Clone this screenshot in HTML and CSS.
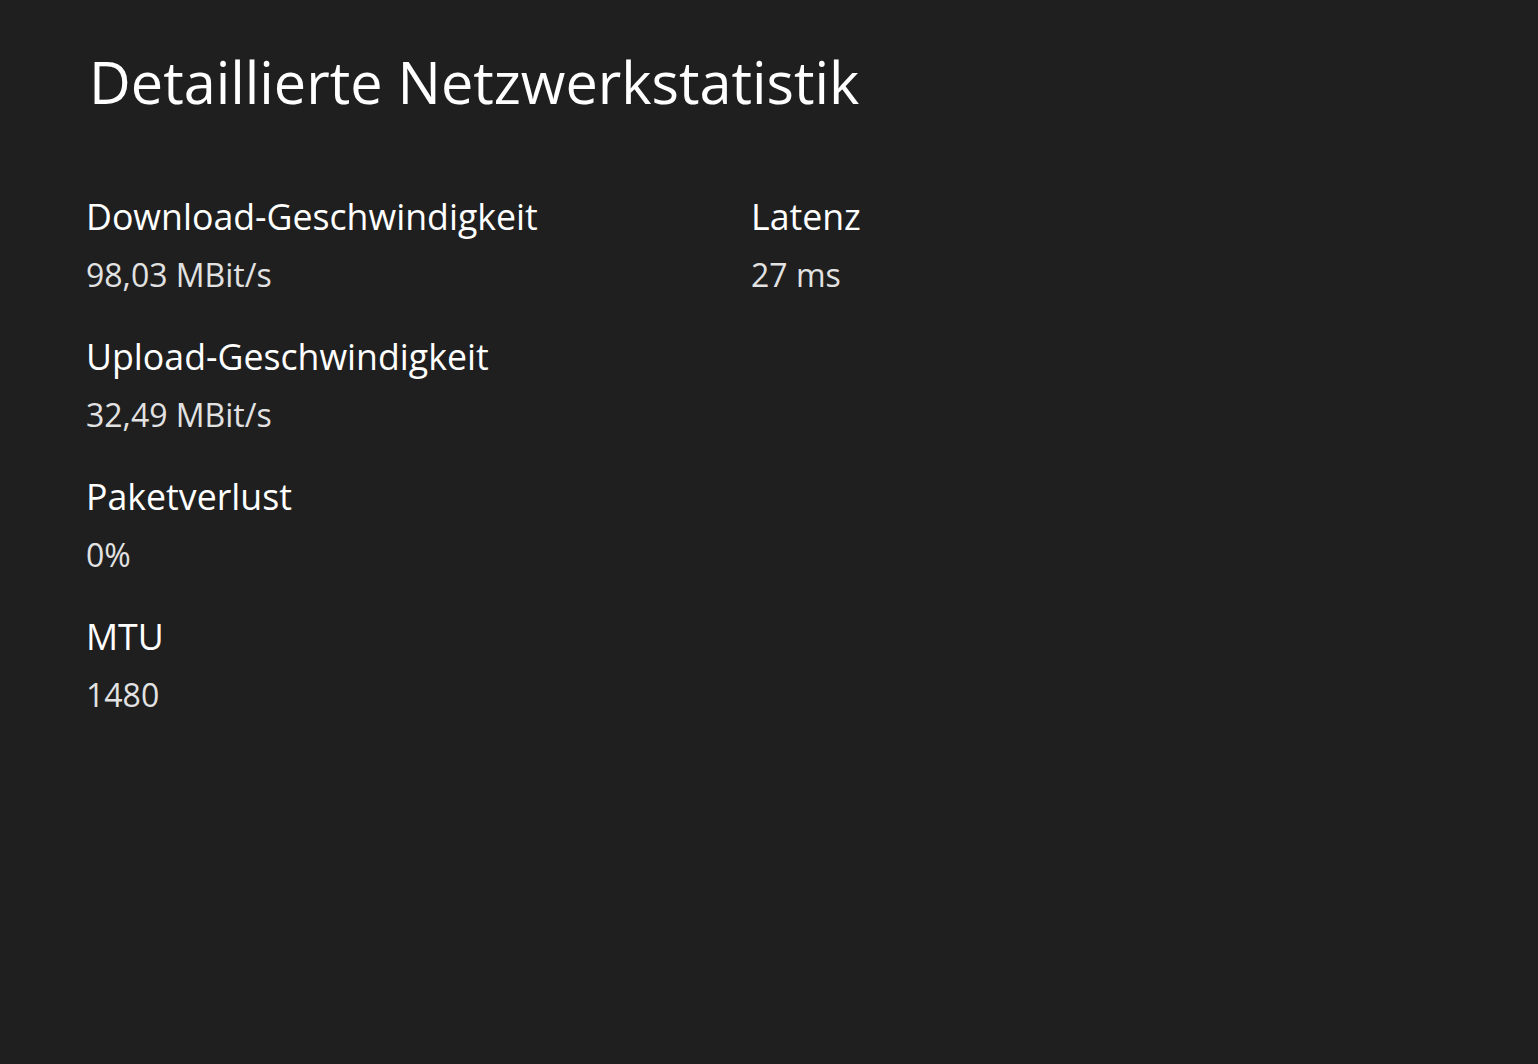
FILE: index.html
```html
<!DOCTYPE html>
<html lang="de">
<head>
<meta charset="utf-8">
<title>Detaillierte Netzwerkstatistik</title>
<link rel="stylesheet" href="styles.css">
</head>
<body>
<main class="page">
  <h1 class="title">Detaillierte Netzwerkstatistik</h1>
  <div class="stats">
    <div class="col col-left">
      <div class="stat">
        <div class="label">Download-Geschwindigkeit</div>
        <div class="value">98,03 MBit/s</div>
      </div>
      <div class="stat">
        <div class="label">Upload-Geschwindigkeit</div>
        <div class="value">32,49 MBit/s</div>
      </div>
      <div class="stat">
        <div class="label">Paketverlust</div>
        <div class="value">0%</div>
      </div>
      <div class="stat">
        <div class="label">MTU</div>
        <div class="value">1480</div>
      </div>
    </div>
    <div class="col col-right">
      <div class="stat">
        <div class="label">Latenz</div>
        <div class="value">27 ms</div>
      </div>
    </div>
  </div>
</main>
</body>
</html>
```

FILE: styles.css
```css
html, body {
  margin: 0;
  padding: 0;
  background: #1f1f1f;
  height: 100%;
}
body {
  font-family: "Open Sans", "Noto Sans", sans-serif;
  color: #ffffff;
}
.page {
  padding: 42px 0 0 86px;
}
.title {
  margin: 0 0 0 3px;
  font-size: 57.6px;
  font-weight: 400;
  line-height: 80px;
}
.stats {
  display: flex;
  margin-top: 72px;
}
.col {
  display: flex;
  flex-direction: column;
  gap: 36px;
}
.col-left {
  width: 665px;
}
.stat {
  display: flex;
  flex-direction: column;
  gap: 14px;
}
.label {
  font-size: 35.7px;
  line-height: 44px;
  color: #ffffff;
}
.value {
  font-size: 32px;
  line-height: 46px;
  color: #e2e2e2;
}
```
